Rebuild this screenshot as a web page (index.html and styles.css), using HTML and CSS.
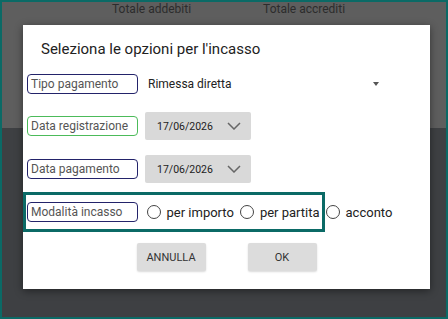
FILE: index.html
```html
<!DOCTYPE html>
<html lang="it">
<head>
<meta charset="UTF-8">
<meta name="viewport" content="width=device-width, initial-scale=1.0">
<title>Incasso</title>
<link rel="stylesheet" href="styles.css">
</head>
<body>
<div class="screen">
    <div class="toolbar">
        <span class="total">Totale addebiti</span>
        <span class="total">Totale accrediti</span>
    </div>
    <div class="content"></div>

    <div class="dialog">
        <h2 class="dialog-title">Seleziona le opzioni per l'incasso</h2>

        <div class="row row-first">
            <div class="tag">Tipo pagamento</div>
            <div class="select">
                <span>Rimessa diretta</span>
                <span class="caret"></span>
            </div>
        </div>

        <div class="row row-date">
            <div class="tag tag-active">Data registrazione</div>
            <div class="date">
                <span>17/06/2026</span>
                <svg class="chevron" width="14" height="8" viewBox="0 0 14 8"><path d="M1 1 L7 7 L13 1" fill="none" stroke="#666" stroke-width="1.5"/></svg>
            </div>
        </div>

        <div class="row row-date2">
            <div class="tag">Data pagamento</div>
            <div class="date">
                <span>17/06/2026</span>
                <svg class="chevron" width="14" height="8" viewBox="0 0 14 8"><path d="M1 1 L7 7 L13 1" fill="none" stroke="#666" stroke-width="1.5"/></svg>
            </div>
        </div>

        <div class="row row-mode">
            <div class="tag">Modalità incasso</div>
            <div class="radios">
                <label class="radio"><span class="dot"></span>per importo</label>
                <label class="radio"><span class="dot"></span>per partita</label>
                <label class="radio"><span class="dot"></span>acconto</label>
            </div>
        </div>

        <div class="actions">
            <button class="btn">ANNULLA</button>
            <button class="btn">OK</button>
        </div>
    </div>
</div>
</body>
</html>
```

FILE: styles.css
```css
body {
    margin: 0;
    font-family: Roboto, "Noto Sans", Arial, sans-serif;
}

.screen {
    position: relative;
    width: 448px;
    height: 319px;
    box-sizing: border-box;
    border: 2px solid #0b6a66;
    display: flex;
    flex-direction: column;
}

.toolbar {
    height: 126px;
    background-color: #5e5e5e;
    padding-left: 110px;
    display: flex;
    gap: 72px;
    align-items: flex-start;
}

.total {
    font-size: 12px;
    line-height: 15px;
    color: #2c2c2c;
}

.content {
    flex: 1;
    background-color: #3e4043;
}

/* dialog lies over the page */
.dialog {
    position: absolute;
    left: 21px;
    top: 23px;
    width: 407px;
    height: 264px;
    box-sizing: border-box;
    padding-left: 4px;
    background-color: #fff;
    box-shadow: 0 2px 8px rgba(0, 0, 0, 0.45);
}

.dialog-title {
    margin: 15px 0 0 14px;
    font-size: 15px;
    line-height: 19px;
    font-weight: normal;
    color: #222;
}

.row {
    display: flex;
    align-items: center;
}

.row-first {
    margin-top: 13px;
    height: 24px;
}

.row-date {
    margin-top: 16px;
    height: 28px;
}

.row-date2 {
    margin-top: 15px;
    height: 28px;
}

.row-mode {
    margin-top: 9px;
    margin-left: -4px;
    width: 302px;
    height: 40px;
    box-sizing: border-box;
    border: 3px solid #0b6a66;
    padding-left: 1px;
}

.tag {
    flex-shrink: 0;
    width: 111px;
    height: 20px;
    box-sizing: border-box;
    border: 1.5px solid #23236a;
    border-radius: 4px;
    padding-left: 3px;
    font-size: 12px;
    line-height: 18px;
    color: #555;
    white-space: nowrap;
}

.tag-active {
    border-color: #4cbb5a;
}

.select {
    margin-left: 7px;
    width: 243px;
    padding-left: 3px;
    display: flex;
    align-items: center;
    justify-content: space-between;
    font-size: 12px;
    color: #222;
}

.caret {
    margin-right: 12px;
    width: 0;
    height: 0;
    border-left: 3.5px solid transparent;
    border-right: 3.5px solid transparent;
    border-top: 4px solid #555;
}

.date {
    margin-left: 7px;
    width: 106px;
    height: 28px;
    box-sizing: border-box;
    padding: 0 10px 0 12px;
    background-color: #d9d9d9;
    border-radius: 2px;
    display: flex;
    align-items: center;
    justify-content: space-between;
    font-size: 10.5px;
    color: #222;
}

.radios {
    display: flex;
    align-items: center;
    gap: 6.5px;
    margin-left: 9px;
    flex-shrink: 0;
}

.radio {
    display: flex;
    align-items: center;
    gap: 5.5px;
    font-size: 13px;
    color: #222;
    white-space: nowrap;
}

.dot {
    width: 14px;
    height: 14px;
    box-sizing: border-box;
    border: 1.5px solid #444;
    border-radius: 50%;
}

.actions {
    margin: 11px 0 0 -4px;
    display: flex;
    justify-content: center;
    gap: 42px;
}

.btn {
    width: 69px;
    height: 28px;
    border: none;
    border-radius: 2px;
    background-color: #dcdcdc;
    box-shadow: 0 1px 2px rgba(0, 0, 0, 0.15);
    font-family: Roboto, Arial, sans-serif;
    font-size: 11px;
    font-weight: normal;
    color: #333;
}
```
